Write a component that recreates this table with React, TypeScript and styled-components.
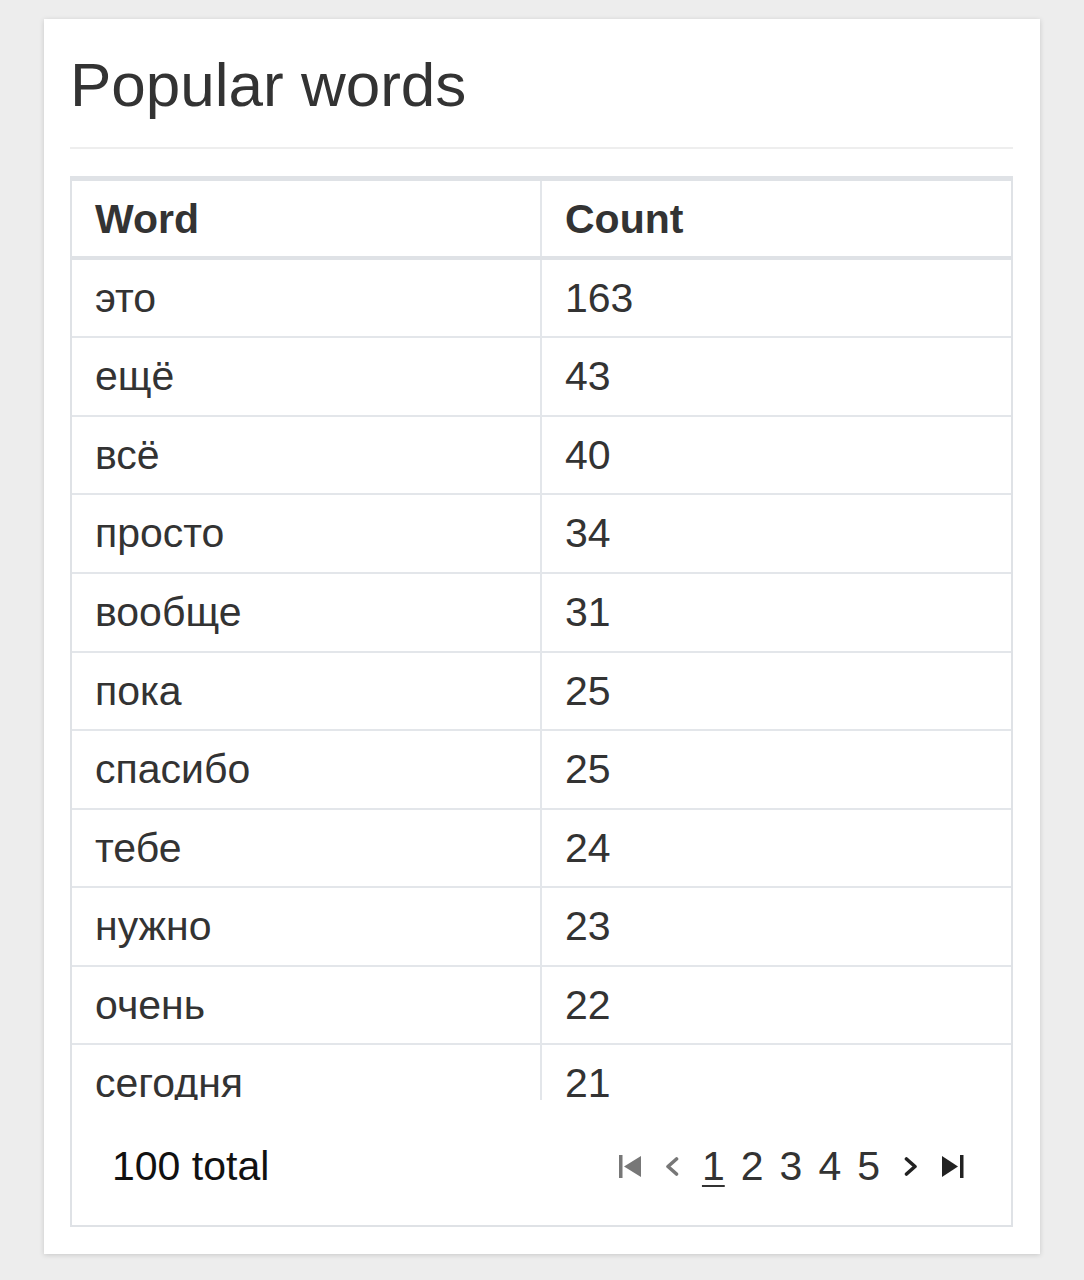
import React from "react";
import styled, { createGlobalStyle } from "styled-components";

const GlobalStyle = createGlobalStyle`
  html, body {
    margin: 0;
    padding: 0;
    background: #ededed;
  }
  body {
    font-family: "Liberation Sans", Arial, Helvetica, sans-serif;
    color: #333;
  }
`;

const Page = styled.div`
  padding: 19px 44px 25px;
`;

const Card = styled.section`
  background: #fff;
  box-shadow: 0 1px 5px rgba(0, 0, 0, 0.16);
  padding: 32px 27px 27px 26px;
`;

const Title = styled.h1`
  margin: 0;
  font-size: 62px;
  font-weight: 400;
  line-height: 1.1;
  color: #333;
`;

const Rule = styled.hr`
  margin: 28px 0 27px;
  border: 0;
  border-top: 2px solid #eeeeee;
  height: 0;
`;

const TableBox = styled.div`
  border: 2px solid #dfe2e6;
`;

const ScrollArea = styled.div`
  height: 922px;
  overflow: hidden;
`;

const Table = styled.table`
  width: 100%;
  border-collapse: collapse;
  table-layout: fixed;
  font-size: 41px;
  line-height: 1.42857;
`;

const HeadCell = styled.th<{ $divider?: boolean }>`
  text-align: left;
  font-weight: 700;
  color: #333;
  padding: 9px 23px 7px;
  border-top: 3px solid #dfe2e6;
  border-bottom: 4px solid #dfe2e6;
  border-left: ${(p) => (p.$divider ? "2px solid #e3e6ea" : "0")};
`;

const Cell = styled.td<{ $divider?: boolean }>`
  padding: 9px 23px;
  color: #333;
  border-bottom: 2px solid #e3e6ea;
  border-left: ${(p) => (p.$divider ? "2px solid #e3e6ea" : "0")};
  white-space: nowrap;
`;

const Footer = styled.div`
  height: 125px;
  display: flex;
  align-items: center;
  justify-content: space-between;
  padding: 8px 47px 0 40px;
  box-sizing: border-box;
`;

const Total = styled.span`
  font-size: 41px;
  color: #111;
`;

const Pager = styled.nav`
  display: flex;
  align-items: center;
  font-size: 41px;
  color: #333;
`;

const IconBox = styled.span<{ $w: number; $ml?: number; $mr?: number; $muted?: boolean }>`
  display: inline-flex;
  align-items: center;
  justify-content: center;
  width: ${(p) => p.$w}px;
  height: 24px;
  margin-left: ${(p) => p.$ml ?? 0}px;
  margin-right: ${(p) => p.$mr ?? 0}px;
  color: ${(p) => (p.$muted ? "#777" : "#222")};
  svg {
    display: block;
  }
`;

const PageNum = styled.span<{ $active?: boolean }>`
  padding: 0 8px;
  line-height: 1;
  text-decoration: ${(p) => (p.$active ? "underline" : "none")};
  text-decoration-thickness: 2px;
  text-underline-offset: 5px;
`;

const rows: [string, number][] = [
  ["это", 163],
  ["ещё", 43],
  ["всё", 40],
  ["просто", 34],
  ["вообще", 31],
  ["пока", 25],
  ["спасибо", 25],
  ["тебе", 24],
  ["нужно", 23],
  ["очень", 22],
  ["сегодня", 21],
];

const FirstIcon = () => (
  <svg width="22" height="23" viewBox="0 0 22 23">
    <rect x="0" y="0" width="3.5" height="23" fill="currentColor" />
    <polygon points="22,1 5,11.5 22,22" fill="currentColor" />
  </svg>
);

const LastIcon = () => (
  <svg width="22" height="23" viewBox="0 0 22 23">
    <polygon points="0,1 16,11.5 0,22" fill="currentColor" />
    <rect x="18" y="0" width="3.5" height="23" fill="currentColor" />
  </svg>
);

const PrevIcon = () => (
  <svg width="14" height="19" viewBox="0 0 14 19">
    <polyline
      points="11.5,2 3,9.5 11.5,17"
      fill="none"
      stroke="currentColor"
      strokeWidth="3.6"
      strokeLinecap="round"
      strokeLinejoin="round"
    />
  </svg>
);

const NextIcon = () => (
  <svg width="14" height="19" viewBox="0 0 14 19">
    <polyline
      points="2.5,2 11,9.5 2.5,17"
      fill="none"
      stroke="currentColor"
      strokeWidth="3.6"
      strokeLinecap="round"
      strokeLinejoin="round"
    />
  </svg>
);

export default function App() {
  return (
    <>
      <GlobalStyle />
      <Page>
        <Card>
          <Title>Popular words</Title>
          <Rule />
          <TableBox>
            <ScrollArea>
              <Table>
                <colgroup>
                  <col style={{ width: "469px" }} />
                  <col />
                </colgroup>
                <thead>
                  <tr>
                    <HeadCell>Word</HeadCell>
                    <HeadCell $divider>Count</HeadCell>
                  </tr>
                </thead>
                <tbody>
                  {rows.map(([word, count]) => (
                    <tr key={word}>
                      <Cell>{word}</Cell>
                      <Cell $divider>{count}</Cell>
                    </tr>
                  ))}
                </tbody>
              </Table>
            </ScrollArea>
            <Footer>
              <Total>100 total</Total>
              <Pager>
                <IconBox $w={22} $mr={24} $muted>
                  <FirstIcon />
                </IconBox>
                <IconBox $w={14} $mr={15} $muted>
                  <PrevIcon />
                </IconBox>
                <PageNum $active>1</PageNum>
                <PageNum>2</PageNum>
                <PageNum>3</PageNum>
                <PageNum>4</PageNum>
                <PageNum>5</PageNum>
                <IconBox $w={14} $ml={16}>
                  <NextIcon />
                </IconBox>
                <IconBox $w={22} $ml={24}>
                  <LastIcon />
                </IconBox>
              </Pager>
            </Footer>
          </TableBox>
        </Card>
      </Page>
    </>
  );
}
